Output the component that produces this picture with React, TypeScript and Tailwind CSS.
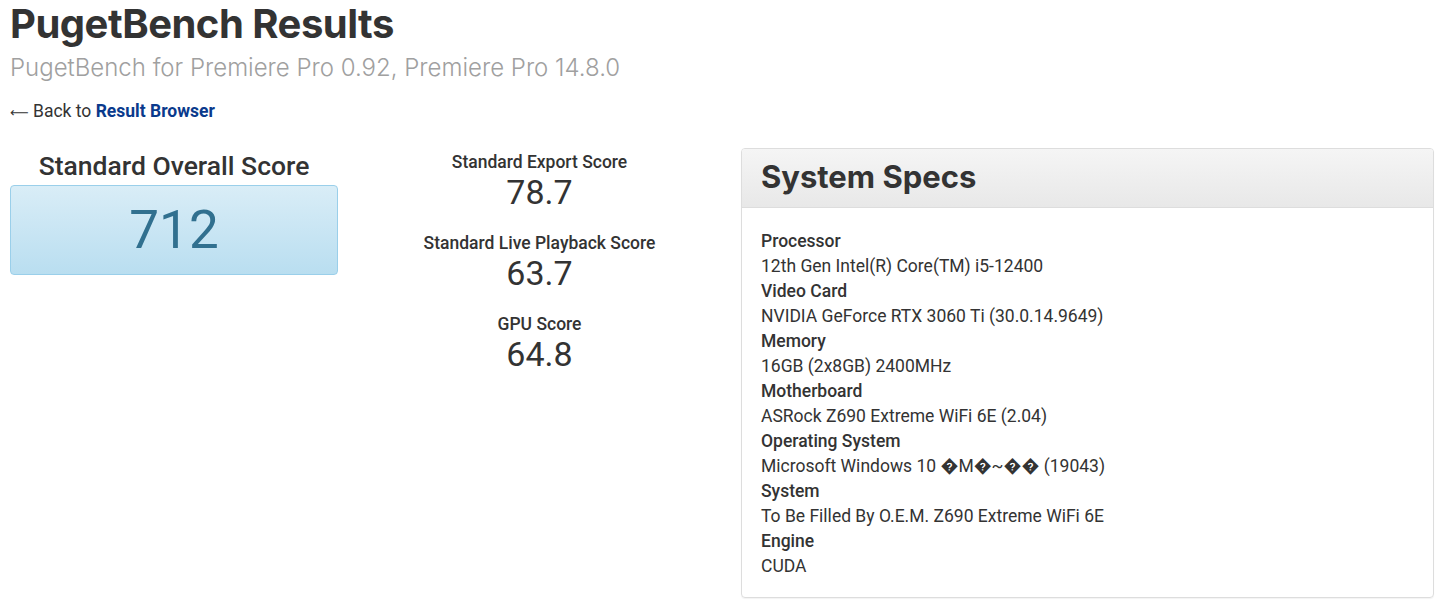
import React from "react";

const specs: { label: string; value: string }[] = [
  { label: "Processor", value: "12th Gen Intel(R) Core(TM) i5-12400" },
  { label: "Video Card", value: "NVIDIA GeForce RTX 3060 Ti (30.0.14.9649)" },
  { label: "Memory", value: "16GB (2x8GB) 2400MHz" },
  { label: "Motherboard", value: "ASRock Z690 Extreme WiFi 6E (2.04)" },
  { label: "Operating System", value: "Microsoft Windows 10 \uFFFDM\uFFFD~\uFFFD\uFFFD (19043)" },
  { label: "System", value: "To Be Filled By O.E.M. Z690 Extreme WiFi 6E" },
  { label: "Engine", value: "CUDA" },
];

const subScores = [
  { label: "Standard Export Score", value: "78.7" },
  { label: "Standard Live Playback Score", value: "63.7" },
  { label: "GPU Score", value: "64.8" },
];

export default function App() {
  return (
    <div className="min-h-[609px] bg-white px-[10px] text-[#333] font-['Roboto',sans-serif]">
      {/* Header */}
      <h1 className="pt-[2px] text-[40px] leading-[44px] font-bold tracking-[-0.5px] text-[#333] font-['Inter',sans-serif]">
        PugetBench Results
      </h1>
      <h2 className="mt-[6px] text-[24px] leading-[32px] font-light text-[#a0a0a0] font-['Inter',sans-serif]">
        PugetBench for Premiere Pro 0.92, Premiere Pro 14.8.0
      </h2>
      <p className="mt-[15px] text-[17.5px] leading-[24px]">
        <span className="font-['DejaVu_Sans',sans-serif] text-[13px]">⟵</span> Back to{" "}
        <a href="#" className="font-bold text-[#0a3a8c]">
          Result Browser
        </a>
      </p>

      {/* Body */}
      <div className="mt-[25px] flex">
        {/* Overall */}
        <div className="w-[328px] shrink-0">
          <h3 className="text-center text-[26.5px] leading-[32px] font-medium text-[#333]">
            Standard Overall Score
          </h3>
          <div className="mt-[3px] flex h-[90px] items-center justify-center rounded-[4px] border border-[#9acfea] bg-gradient-to-b from-[#d9edf7] to-[#b9def0]">
            <span className="text-[53px] leading-none text-[#31708f]">712</span>
          </div>
        </div>

        {/* Sub scores */}
        <div className="flex-1 text-center">
          {subScores.map((s) => (
            <div key={s.label} className="mb-[21px]">
              <div className="text-[17.5px] leading-[24px] font-medium text-[#333]">{s.label}</div>
              <div className="text-[34px] leading-[36px] text-[#333]">{s.value}</div>
            </div>
          ))}
        </div>

        {/* System specs panel */}
        <div className="-mt-[2px] mr-[2px] w-[693px] shrink-0 self-start overflow-hidden rounded-[4px] border border-[#ddd] shadow-[0_1px_1px_rgba(0,0,0,0.05)]">
          <div className="h-[59px] border-b border-[#ddd] bg-gradient-to-b from-[#f5f5f5] to-[#e8e8e8] px-[19px] pt-[8px]">
            <h3 className="text-[31px] leading-[40px] font-bold text-[#333] font-['Inter',sans-serif]">
              System Specs
            </h3>
          </div>
          <div className="px-[19px] pt-[21px] pb-[18px] text-[17.5px] leading-[25px]">
            {specs.map((s) => (
              <div key={s.label}>
                <div className="font-medium text-[#333]">{s.label}</div>
                <div className="text-[#333]">{s.value}</div>
              </div>
            ))}
          </div>
        </div>
      </div>
    </div>
  );
}
